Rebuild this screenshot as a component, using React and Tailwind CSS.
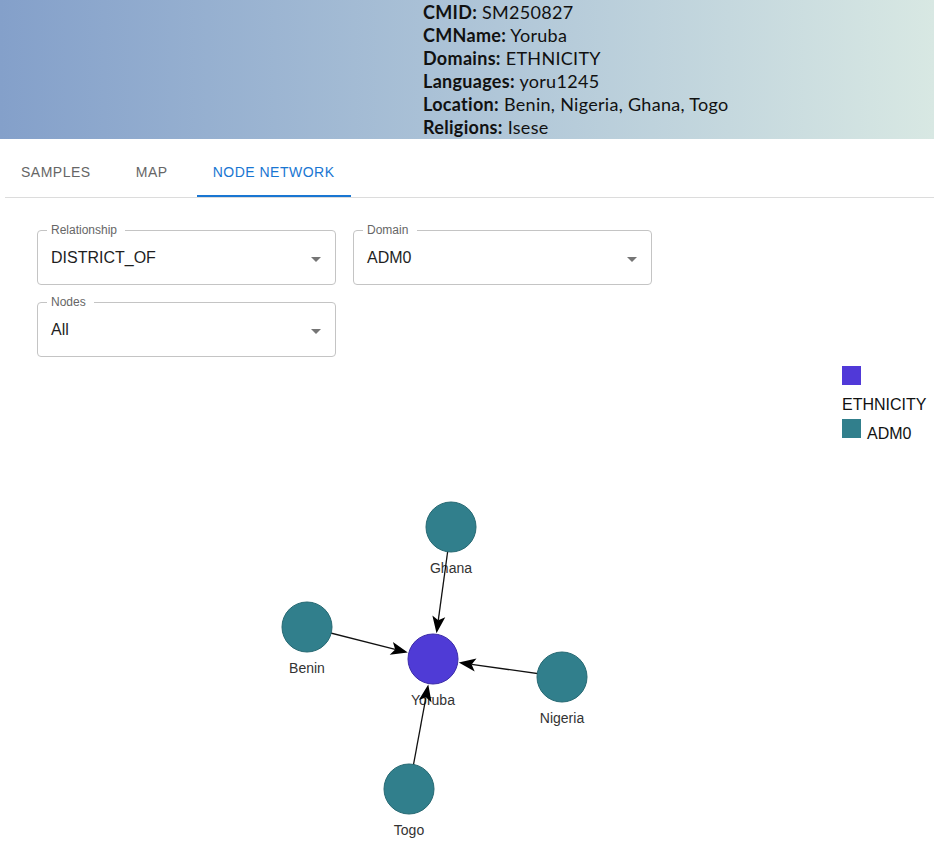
import React, { useState } from "react";

const info = [
    ["CMID", "SM250827"],
    ["CMName", "Yoruba"],
    ["Domains", "ETHNICITY"],
    ["Languages", "yoru1245"],
    ["Location", "Benin, Nigeria, Ghana, Togo"],
    ["Religions", "Isese"],
];

const tabs = ["SAMPLES", "MAP", "NODE NETWORK"];

const target = { id: "Yoruba", x: 433, y: 659 };
const nodes = [
    { id: "Ghana", x: 451, y: 527 },
    { id: "Benin", x: 307, y: 627 },
    { id: "Nigeria", x: 562, y: 677 },
    { id: "Togo", x: 409, y: 789 },
];
const R = 25;
const labelFont = "Liberation Sans, Arial, sans-serif";

function Arrow({ from, to }) {
    // line from source center to target edge, arrowhead at target
    const dx = to.x - from.x;
    const dy = to.y - from.y;
    const len = Math.sqrt(dx * dx + dy * dy);
    const ux = dx / len;
    const uy = dy / len;
    const tipX = to.x - ux * (R + 1);
    const tipY = to.y - uy * (R + 1);
    const baseX = tipX - ux * 17;
    const baseY = tipY - uy * 17;
    const px = -uy * 6.5;
    const py = ux * 6.5;
    const backX = tipX - ux * 13;
    const backY = tipY - uy * 13;
    return (
        <g>
            <line x1={from.x} y1={from.y} x2={backX} y2={backY} stroke="#111" strokeWidth="1.3" />
            <polygon
                points={`${tipX},${tipY} ${baseX + px},${baseY + py} ${backX},${backY} ${baseX - px},${baseY - py}`}
                fill="#000"
            />
        </g>
    );
}

function SelectBox({ label, value, notch }) {
    return (
        <div className="relative h-[55px] rounded-[4px] border border-[#c4c4c4] flex items-center pl-[13px] pr-[7px] font-['Liberation_Sans',Arial,sans-serif]">
            <span
                className="absolute -top-[9px] left-[9px] bg-white px-[4px] text-[12px] text-[#666] leading-[16px]"
                style={{ width: notch }}
            >
                {label}
            </span>
            <span className="flex-1 text-[16px] text-[#1f1f1f]">{value}</span>
            <svg width="24" height="24" viewBox="0 0 24 24" className="mt-[2px]">
                <path d="M7 10l5 5 5-5z" fill="#757575" />
            </svg>
        </div>
    );
}

export default function App() {
    const [active, setActive] = useState(2);

    return (
        <div className="w-[934px] h-[852px] bg-white overflow-hidden font-['Liberation_Sans',Arial,sans-serif]">
            {/* header */}
            <div className="h-[139px] bg-gradient-to-r from-[#84a0ca] to-[#d8e8e3] pl-[423px] pt-[1px]">
                {info.map(([k, v]) => (
                    <div key={k} className="text-[18px] leading-[23px] text-[#111] font-['Lato',sans-serif] tracking-[0.3px]">
                        <span className="font-bold">{k}:</span> {v}
                    </div>
                ))}
            </div>

            {/* tabs */}
            <div className="mt-[10px] ml-[5px] flex border-b border-[#dcdcdc]">
                {tabs.map((t, i) => (
                    <button
                        key={t}
                        onClick={() => setActive(i)}
                        className={`h-[48px] min-w-[90px] px-[16px] text-[14px] font-normal tracking-[0.5px] border-b-2 ${
                            active === i ? "text-[#1976d2] border-[#1976d2]" : "text-[#666] border-transparent"
                        }`}
                    >
                        {t}
                    </button>
                ))}
            </div>

            {/* filters */}
            <div className="mt-[32px] ml-[37px] grid grid-cols-[299px_299px] gap-x-[17px] gap-y-[17px]">
                <SelectBox label="Relationship" value="DISTRICT_OF" notch={78} />
                <SelectBox label="Domain" value="ADM0" notch={54} />
                <SelectBox label="Nodes" value="All" notch={47} />
            </div>

            {/* network */}
            <svg width="934" height="492" viewBox="0 360 934 492" className="block mt-[3px]">
                <rect x="842" y="366" width="19" height="19" fill="#5039d8" />
                <text x="842" y="410" fontSize="16" fontFamily={labelFont} fill="#111">
                    ETHNICITY
                </text>
                <rect x="842" y="419" width="19" height="19" fill="#317f8c" />
                <text x="867" y="439" fontSize="16" fontFamily={labelFont} fill="#111">
                    ADM0
                </text>

                {[...nodes, target].map((n) => (
                    <text
                        key={n.id}
                        x={n.x}
                        y={n.y + 46}
                        textAnchor="middle"
                        fontSize="14"
                        fontFamily={labelFont}
                        fill="#333"
                    >
                        {n.id}
                    </text>
                ))}

                {nodes.map((n) => (
                    <Arrow key={n.id} from={n} to={target} />
                ))}

                {nodes.map((n) => (
                    <circle key={n.id} cx={n.x} cy={n.y} r={R} fill="#317f8c" stroke="#256872" strokeWidth="1" />
                ))}
                <circle cx={target.x} cy={target.y} r={R} fill="#4f3bd6" stroke="#3a2aa8" strokeWidth="1" />
            </svg>
        </div>
    );
}
